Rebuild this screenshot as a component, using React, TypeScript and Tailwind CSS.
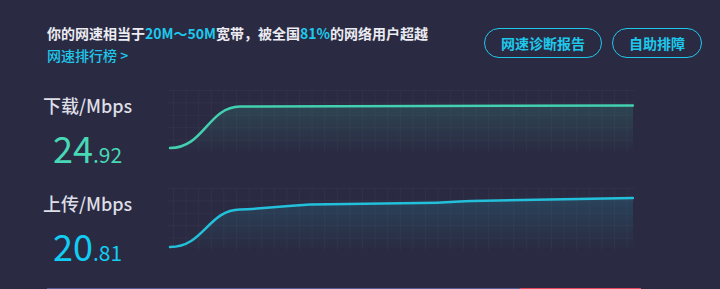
import React from "react";

const font = { fontFamily: '"Noto Sans CJK SC", "Noto Sans", sans-serif' };

interface ChartProps {
  id: string;
  color: string;
  line: string;
}

const Chart = ({ id, color, line }: ChartProps) => {
  return (
    <svg width="466" height="62" viewBox="0 0 466 62" className="block">
      <defs>
        <pattern id={`grid-${id}`} width="12.6" height="12.4" patternUnits="userSpaceOnUse" x="5" y="0">
          <path d="M0 0 L0 12.4 M0 0 L12.6 0" stroke="#ffffff" strokeOpacity="0.05" strokeWidth="1" fill="none" />
        </pattern>
        <linearGradient id={`fill-${id}`} x1="0" y1="0" x2="0" y2="1">
          <stop offset="0" stopColor={color} stopOpacity="0.16" />
          <stop offset="1" stopColor={color} stopOpacity="0" />
        </linearGradient>
      </defs>
      <rect x="0" y="0" width="466" height="62" fill={`url(#grid-${id})`} />
      <path d={`${line} L465 61 L2 61 Z`} fill={`url(#fill-${id})`} />
      <path d={line} fill="none" stroke={color} strokeWidth="2.5" strokeLinecap="round" />
    </svg>
  );
};

interface RowProps {
  label: string;
  whole: string;
  frac: string;
  numColor: string;
  chart: React.ReactNode;
}

const SpeedRow = ({ label, whole, frac, numColor, chart }: RowProps) => {
  return (
    <div className="flex h-[98px]">
      <div className="w-[168px] pl-[43px]">
        <div className="mt-[5px] text-[18px] leading-[24px] font-medium text-[#dedee6]">{label}</div>
        <div className={`mt-[13px] pl-[10px] leading-[35px] ${numColor}`}>
          <span className="text-[36px]">{whole}</span>
          <span className="text-[21px]">.{frac}</span>
        </div>
      </div>
      <div className="mt-[2px]">{chart}</div>
    </div>
  );
};

export default function App() {
  return (
    <div className="w-[720px] h-[289px] overflow-hidden bg-[#2a2b42]" style={font}>
      <div className="flex justify-between pt-[23px] pl-[47px] pr-[18px]">
        <div>
          <div className="text-[14px] leading-[21px] font-bold text-[#ececf2]">
            你的网速相当于<span className="text-[#1ec8ec]">20M～50M</span>宽带，被全国
            <span className="text-[#1ec8ec]">81%</span>的网络用户超越
          </div>
          <div className="text-[14px] leading-[22px] font-medium text-[#1ec8ec]">网速排行榜 &gt;</div>
        </div>
        <div className="flex gap-[10px] pt-[5px]">
          <button className="h-[30px] px-[16px] rounded-full border border-[#1ec8ec] text-[14px] font-bold text-[#1ec8ec]">
            网速诊断报告
          </button>
          <button className="h-[30px] px-[16px] rounded-full border border-[#1ec8ec] text-[14px] font-bold text-[#1ec8ec]">
            自助排障
          </button>
        </div>
      </div>
      <div className="mt-[22px]">
        <SpeedRow
          label="下载/Mbps"
          whole="24"
          frac="92"
          numColor="text-[#48d8b6]"
          chart={<Chart id="down" color="#42d0b0" line="M2 58 C 36 58, 40 17, 72 16.5 L 465 15.5" />}
        />
        <SpeedRow
          label="上传/Mbps"
          whole="20"
          frac="81"
          numColor="text-[#12ccf2]"
          chart={
            <Chart
              id="up"
              color="#22c0da"
              line="M2 59 C 36 59, 40 22, 72 21.5 C 92 21, 100 19, 142 16.5 L 252 15 C 280 15, 290 13, 304 13 L 465 10"
            />
          }
        />
      </div>
      <div className="flex pl-[47px] mt-[4px]">
        <div className="w-[473px] h-[3px] bg-[#565b92]" />
        <div className="w-[121px] h-[3px] bg-[#e4475a]" />
      </div>
    </div>
  );
}
